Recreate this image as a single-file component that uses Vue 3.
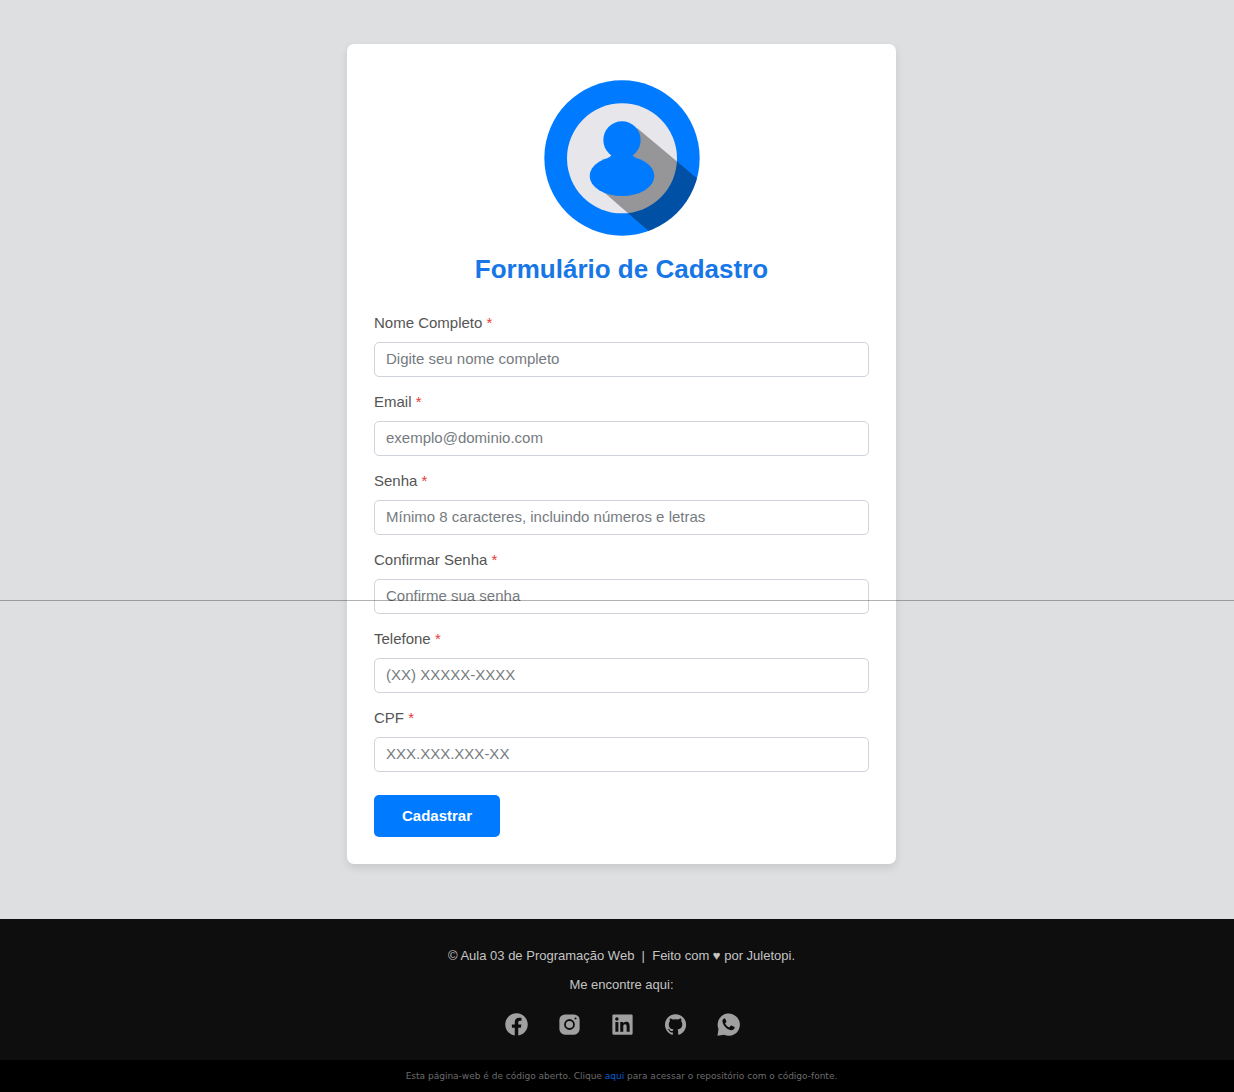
<script setup>
const fields = [
  { id: 'nome', label: 'Nome Completo', type: 'text', placeholder: 'Digite seu nome completo' },
  { id: 'email', label: 'Email', type: 'email', placeholder: 'exemplo@dominio.com' },
  { id: 'senha', label: 'Senha', type: 'password', placeholder: 'Mínimo 8 caracteres, incluindo números e letras' },
  { id: 'confirmar', label: 'Confirmar Senha', type: 'password', placeholder: 'Confirme sua senha' },
  { id: 'telefone', label: 'Telefone', type: 'tel', placeholder: '(XX) XXXXX-XXXX' },
  { id: 'cpf', label: 'CPF', type: 'text', placeholder: 'XXX.XXX.XXX-XX' },
]

const socials = [
  {
    name: 'Facebook',
    path: 'M12.001 2.002c-5.522 0-9.999 4.477-9.999 9.999 0 4.99 3.656 9.126 8.437 9.879v-6.988h-2.54v-2.891h2.54V9.798c0-2.508 1.493-3.891 3.776-3.891 1.094 0 2.24.195 2.24.195v2.459h-1.264c-1.24 0-1.628.772-1.628 1.563v1.875h2.771l-.443 2.891h-2.328v6.988C18.344 21.129 22 16.992 22 12.001c0-5.522-4.477-9.999-9.999-9.999z',
  },
  {
    name: 'Instagram',
    path: 'M8 3h8a5 5 0 0 1 5 5v8a5 5 0 0 1-5 5H8a5 5 0 0 1-5-5V8a5 5 0 0 1 5-5zM12 7.2a4.8 4.8 0 1 0 0 9.6a4.8 4.8 0 1 0 0-9.6zM12 8.8a3.2 3.2 0 1 1 0 6.4a3.2 3.2 0 1 1 0-6.4zM17.4 5.7a.9.9 0 1 0 0 1.8a.9.9 0 1 0 0-1.8z',
  },
  {
    name: 'LinkedIn',
    path: 'M20 3H4a1 1 0 0 0-1 1v16a1 1 0 0 0 1 1h16a1 1 0 0 0 1-1V4a1 1 0 0 0-1-1zM8.339 18.337H5.667v-8.59h2.672v8.59zM7.003 8.574a1.548 1.548 0 1 1 0-3.096 1.548 1.548 0 0 1 0 3.096zm11.335 9.763h-2.669V14.16c0-.996-.018-2.277-1.388-2.277-1.39 0-1.601 1.086-1.601 2.207v4.248h-2.667v-8.59h2.56v1.174h.037c.355-.675 1.227-1.387 2.524-1.387 2.704 0 3.203 1.778 3.203 4.092v4.71z',
  },
  {
    name: 'GitHub',
    path: 'M12.026 2.8c-5.2 0-9.4 4.2-9.4 9.4 0 4.15 2.7 7.68 6.43 8.92.47.085.64-.2.64-.45 0-.22-.008-.82-.01-1.6-2.62.57-3.17-1.26-3.17-1.26-.43-1.09-1.04-1.38-1.04-1.38-.85-.58.065-.57.065-.57.945.066 1.44.97 1.44.97.84 1.44 2.2 1.02 2.74.78.086-.61.33-1.02.6-1.26-2.09-.24-4.28-1.04-4.28-4.65 0-1.02.37-1.87.97-2.52-.095-.24-.42-1.2.093-2.49 0 0 .79-.25 2.58.96a9 9 0 0 1 4.7 0c1.8-1.21 2.59-.96 2.59-.96.51 1.29.19 2.25.093 2.49.6.65.965 1.5.965 2.52 0 3.61-2.2 4.41-4.29 4.64.33.29.64.86.64 1.74 0 1.26-.01 2.27-.01 2.58 0 .25.17.54.65.45 3.73-1.25 6.42-4.77 6.42-8.92 0-5.2-4.2-9.4-9.4-9.4z',
  },
  {
    name: 'WhatsApp',
    path: 'M2.2 22l.9-6A9.9 9.9 0 1 1 8 21.1zM8 6.700C7 7.300 6.400 8.400 6.700 9.800c.8 3.600 3.900 6.700 7.500 7.300 1.400.2 2.800-.6 3.200-1.900.2-.5 0-.9-.4-1.100l-2.100-1.100c-.4-.2-.8-.1-1.100.3l-.8 1c-.2.2-.5.3-.8.1-1.400-.7-2.400-1.700-3.100-3-.1-.3-.1-.5.1-.7l.7-.8c.3-.3.3-.6.2-.9L9.200 7c-.2-.4-.7-.5-1.200-.3z',
  },
]
</script>

<template>
  <div class="page">
    <main>
      <form class="card" novalidate @submit.prevent>
        <svg class="avatar" viewBox="71 60 468 468" aria-hidden="true">
          <defs>
            <clipPath id="disc"><circle cx="305" cy="294" r="233" /></clipPath>
          </defs>
          <circle cx="305" cy="294" r="233" fill="#007bff" />
          <circle cx="305" cy="295" r="165" fill="#e6e6eb" />
          <path d="M350 204 L570 388 V550 H427 L232 380 Z" fill="#000" fill-opacity=".35" clip-path="url(#disc)" />
          <circle cx="305" cy="240" r="56" fill="#007bff" />
          <path d="M270 280 Q278 289 262 293 H348 Q332 289 340 280Z" fill="#007bff" />
          <ellipse cx="305" cy="348" rx="97" ry="60" fill="#007bff" />
        </svg>
        <h1>Formulário de Cadastro</h1>
        <div v-for="f in fields" :key="f.id" class="field">
          <label :for="f.id">{{ f.label }} <span class="required">*</span></label>
          <input :id="f.id" :type="f.type" :placeholder="f.placeholder" required />
        </div>
        <button type="submit">Cadastrar</button>
      </form>
    </main>
    <footer>
      <div class="about">
        <p>© Aula 03 de Programação Web &nbsp;|&nbsp; Feito com ♥ por Juletopi.</p>
        <p>Me encontre aqui:</p>
        <nav>
          <a v-for="s in socials" :key="s.name" href="#" :aria-label="s.name">
            <svg viewBox="0 0 24 24" aria-hidden="true"><path :d="s.path" fill-rule="evenodd" /></svg>
          </a>
        </nav>
      </div>
      <p class="source">
        Esta página-web é de código aberto. Clique <a href="#">aqui</a> para acessar o repositório com o código-fonte.
      </p>
    </footer>
    <div class="divider"></div>
  </div>
</template>

<style>
body {
  background: #dddfe1;
}
</style>

<style scoped>
.page {
  position: relative;
  min-height: 100vh;
  display: flex;
  flex-direction: column;
  font-family: "Liberation Sans", Arial, sans-serif;
  background: #dddfe1;
}
main {
  flex: 1;
  padding: 44px 0 55px 9px;
}
.card {
  box-sizing: border-box;
  max-width: 549px;
  margin: 0 auto;
  padding: 36px 27px 27px;
  background: #fff;
  border-radius: 7px;
  box-shadow: 0 4px 8px rgba(0, 0, 0, 0.1);
}
.avatar {
  display: block;
  width: 156px;
  height: 156px;
  margin: 0 auto 18px;
}
h1 {
  margin: 0 0 30px;
  font-size: 26px;
  line-height: 30px;
  text-align: center;
  color: #1877e6;
}
.field {
  margin-bottom: 16px;
}
label {
  display: block;
  margin-bottom: 10px;
  font-size: 15px;
  line-height: 18px;
  color: #555;
}
.required {
  color: #e53935;
}
input {
  display: block;
  box-sizing: border-box;
  width: 100%;
  height: 35px;
  padding: 0 11px 2px;
  border: 1px solid #ced4da;
  border-radius: 5px;
  background: #fff;
  font-family: inherit;
  font-size: 15px;
}
input::placeholder {
  color: #757b80;
  opacity: 1;
}
button {
  display: block;
  margin-top: 23px;
  padding: 12px 28px;
  border: 0;
  border-radius: 5px;
  background: #007bff;
  color: #fff;
  font-family: inherit;
  font-size: 15px;
  font-weight: bold;
  line-height: 18px;
}
footer {
  background: #0e0e0e;
  color: #c4c4c4;
  text-align: center;
}
.about {
  padding: 27px 0 22px 9px;
}
p {
  margin: 0;
  font-size: 13px;
  line-height: 20px;
}
.about p {
  margin-bottom: 9px;
}
nav {
  display: flex;
  justify-content: center;
  gap: 26px;
  padding: 7px 0 0 2px;
}
nav a,
nav svg {
  display: block;
  width: 27px;
  height: 27px;
}
nav svg {
  fill: #a0a0a0;
}
footer .source {
  padding: 6px 0 6px 9px;
  background: #000;
  color: #6c6c6c;
  font-family: "DejaVu Sans", Verdana, sans-serif;
  font-size: 9px;
}
.source a {
  color: #0b5ed7;
  text-decoration: none;
}
.divider {
  position: absolute;
  top: 600px;
  left: 0;
  right: 0;
  height: 1px;
  background: rgba(0, 0, 0, 0.3);
  pointer-events: none;
}
</style>
